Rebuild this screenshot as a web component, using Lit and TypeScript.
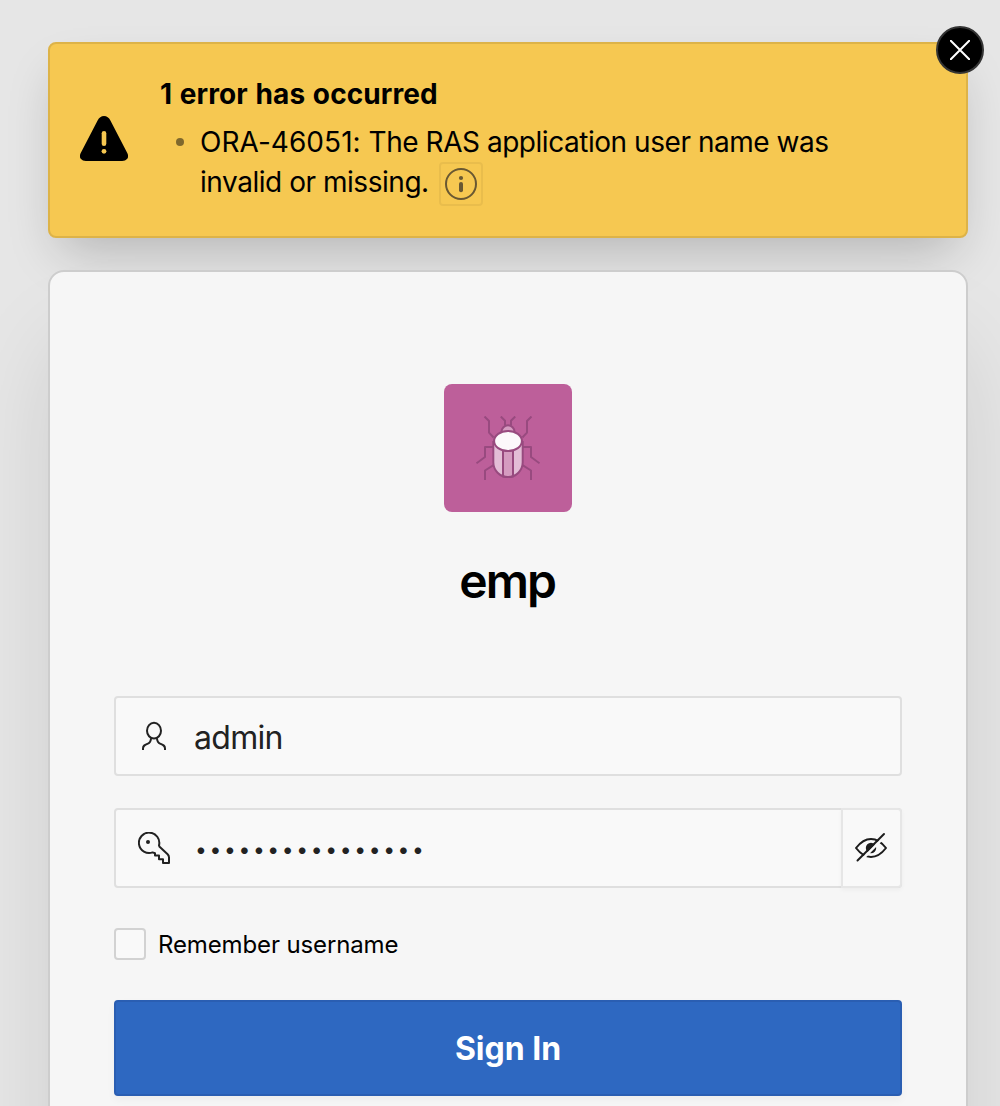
import { LitElement, html, css, svg } from "lit";
import { customElement, property, state } from "lit/decorators.js";

interface AlertMessage {
  code: string;
  lines: string[];
}

@customElement("error-alert")
class ErrorAlert extends LitElement {
  static styles = css`
    :host {
      display: block;
    }
    .alert {
      position: relative;
      box-sizing: border-box;
      height: 196px;
      display: flex;
      align-items: flex-start;
      gap: 32px;
      padding: 30px;
      border: 2px solid #ddb348;
      border-radius: 8px;
      background: #f6c851;
      color: #000;
      box-shadow: 0 24px 48px -12px rgba(0, 0, 0, 0.22);
    }
    .warning {
      flex: none;
      align-self: center;
      width: 48px;
      height: 48px;
      margin-bottom: 2px;
    }
    .title {
      margin: 0 0 8px;
      font-size: 28px;
      line-height: 40px;
      font-weight: 700;
      letter-spacing: 0.08px;
      word-spacing: 1px;
    }
    .list {
      margin: 0;
      padding: 0;
      list-style: none;
    }
    .item {
      display: grid;
      grid-template-columns: 40px 660px;
      font-size: 28px;
      line-height: 40px;
      letter-spacing: -0.46px;
    }
    .code {
      letter-spacing: 0.04px;
    }
    .bullet {
      width: 8px;
      height: 8px;
      margin: 16px 0 0 16px;
      border-radius: 50%;
      background: #7f682c;
    }
    .info {
      display: inline-flex;
      align-items: center;
      justify-content: center;
      box-sizing: border-box;
      width: 44px;
      height: 44px;
      margin-left: 10px;
      padding: 0;
      vertical-align: -8px;
      border: 2px solid rgba(0, 0, 0, 0.05);
      border-radius: 4px;
      background: none;
    }
    .close {
      position: absolute;
      top: -18px;
      right: -18px;
      box-sizing: border-box;
      width: 48px;
      height: 48px;
      padding: 0;
      display: grid;
      place-items: center;
      border: 2px solid #343434;
      border-radius: 50%;
      background: #000;
    }
  `;

  @property() heading = "";
  @property({ attribute: false }) messages: AlertMessage[] = [];

  render() {
    return html`
      <div class="alert" role="alert">
        <svg class="warning" viewBox="0 0 48 48">
          <path d="M17.6 5.6Q19.8 1 24 1T30.4 5.6L47 37.4Q49.3 41.6 47 43.9Q45.400 46 42.200 46H5.800Q2.600 46 1 43.900Q-1.300 41.600 1 37.400Z" />
          <path d="M24 18.200V28.800" stroke="#f6c851" stroke-width="4.600" stroke-linecap="round" />
          <circle cx="24" cy="36.300" r="2.400" fill="#f6c851" />
        </svg>
        <div>
          <h2 class="title">${this.heading}</h2>
          <ul class="list">
            ${this.messages.map(
              (m) => html`<li class="item">
                <span class="bullet"></span>
                <span><span class="code">${`${m.code}: `}</span>${m.lines.map((line, i) => (i ? html`<br />${line}` : line))}<button class="info" aria-label="Details"><svg width="32" height="32" viewBox="0 0 32 32" fill="#695832"><circle cx="16" cy="16" r="15" fill="none" stroke="#695832" stroke-width="2" /><circle cx="16" cy="10" r="2.100" /><rect x="14" y="14" width="4" height="10.200" rx="2" /></svg></button></span>
              </li>`
            )}
          </ul>
        </div>
        <button class="close" aria-label="Close">
          <svg width="20" height="20" viewBox="0 0 20 20" stroke="#fff" stroke-width="2" stroke-linecap="round">
            <path d="M.8.8 19.200 19.200M19.200.8.8 19.200" />
          </svg>
        </button>
      </div>
    `;
  }
}

const leftLegs = "M8.500.5 13 5V16.600L17.600 21.500M17 31H9V41L.5 47.300M17.500 49.200 9 54.500V64M24.800.5 29 4.800V9.500";

const userIcon = svg`<svg width="32" height="32" viewBox="0 0 32 32" fill="none" stroke="#222" stroke-width="2">
  <ellipse cx="16" cy="10.700" rx="7" ry="7.900" />
  <path d="M5 30V28.500C5 25.600 6.600 25 9.500 23.800 12 22.800 13 21.500 13 18.200M27 30V28.500C27 25.600 25.400 25 22.500 23.800 20 22.800 19 21.500 19 18.200" />
</svg>`;

const keyIcon = svg`<svg width="32" height="32" viewBox="0 0 32 32" fill="none" stroke="#222" stroke-width="2">
  <path d="M21 13.300A10.200 10.200 0 1 0 14.600 20.400L17 21.200V23.500H21V27.300H25V31H31V25.500Q31 23.600 29.600 22.200L21.600 14.800Z" stroke-linejoin="round" />
  <circle cx="10" cy="10" r="2" fill="#222" stroke="none" />
</svg>`;

@customElement("app-root")
class AppRoot extends LitElement {
  static styles = css`
    :host {
      display: block;
      font-family: Inter, "Liberation Sans", sans-serif;
    }
    .page {
      box-sizing: border-box;
      height: 1106px;
      overflow: hidden;
      padding: 42px 32px 0 48px;
      background: #e6e6e6;
      color: #000;
    }
    .card {
      position: relative;
      box-sizing: border-box;
      height: 960px;
      margin-top: 32px;
      padding: 112px 64px 0;
      display: flex;
      flex-direction: column;
      align-items: stretch;
      border: 2px solid #cdcdcd;
      border-radius: 16px;
      background: #f6f6f6;
      box-shadow: 0 64px 96px -16px rgba(0, 0, 0, 0.14);
    }
    .logo {
      align-self: center;
      width: 128px;
      height: 128px;
      display: grid;
      place-items: center;
      border-radius: 8px;
      background: #bd5f9a;
    }
    .name {
      margin: 41px 0 87px;
      text-align: center;
      font-size: 48px;
      line-height: 56px;
      font-weight: 600;
      letter-spacing: -1.9px;
      text-indent: -1.5px;
    }
    .field {
      box-sizing: border-box;
      height: 80px;
      display: flex;
      align-items: center;
      border: 2px solid #dfdfdf;
      border-radius: 4px;
      background: #f9f9f9;
      color: #222;
    }
    .field + .field {
      margin-top: 32px;
    }
    .icon {
      display: flex;
      width: 32px;
      height: 32px;
      margin: 0 24px 0 22px;
    }
    .value {
      flex: 1;
      padding-top: 2px;
      font-size: 32px;
      letter-spacing: -0.7px;
    }
    .masked {
      font-size: 21px;
      letter-spacing: 2.66px;
      padding: 3px 0 0 1px;
    }
    .reveal {
      align-self: stretch;
      box-sizing: border-box;
      width: 61px;
      margin: -2px;
      padding: 0 1px 0 0;
      display: grid;
      place-items: center;
      border: 2px solid #e6e6e6;
      border-radius: 0 4px 4px 0;
      background: #f9f9f9;
      box-shadow: 0 2px 4px rgba(0, 0, 0, 0.04);
    }
    .remember {
      display: flex;
      align-items: center;
      gap: 12px;
      height: 32px;
      margin: 40px 0;
      font-size: 24px;
      letter-spacing: -0.13px;
    }
    .caption {
      padding-top: 1px;
    }
    .box {
      box-sizing: border-box;
      width: 32px;
      height: 32px;
      border: 2px solid #d2d2d2;
      border-radius: 4px;
      background: #f9f9f9;
    }
    .submit {
      box-sizing: border-box;
      flex: none;
      height: 96px;
      padding: 1px 0 0;
      border: 2px solid #2a5eb2;
      border-radius: 4px;
      background: #2e68c1;
      color: #fff;
      font: 700 32px Inter, "Liberation Sans", sans-serif;
      box-shadow: 0 4px 8px rgba(0, 0, 0, 0.04);
    }
  `;

  @state() private username = "admin";
  @state() private passwordLength = 16;

  render() {
    return html`
      <main class="page">
        <error-alert
          .heading=${"1 error has occurred"}
          .messages=${[{ code: "ORA-46051", lines: ["The RAS application user name was", "invalid or missing."] }]}
        ></error-alert>
        <section class="card">
          <div class="logo">
            <svg width="64" height="64" viewBox="0 0 64 64" fill="none" stroke="#984a7f" stroke-width="2" stroke-linejoin="round">
              <path d=${leftLegs} />
              <path d=${leftLegs} transform="matrix(-1 0 0 1 64 0)" />
              <path d="M25.500 17V15.800A6.500 6.500 0 0 1 38.500 15.800V17Z" fill="#d59bc0" />
              <path d="M17.300 25V46.300A14.700 14.700 0 0 0 46.700 46.300V25Z" fill="#e3bdd6" stroke="none" />
              <path d="M27 33H37V60.500Q32 61.600 27 60.500Z" fill="#d59bc0" />
              <path d="M17.300 25V46.300A14.700 14.700 0 0 0 46.700 46.300V25" />
              <ellipse cx="32" cy="25" rx="13.900" ry="10" fill="#fcf8fb" />
            </svg>
          </div>
          <h1 class="name">emp</h1>
          <div class="field">
            <span class="icon">${userIcon}</span>
            <span class="value">${this.username}</span>
          </div>
          <div class="field">
            <span class="icon">${keyIcon}</span>
            <span class="value masked">${"•".repeat(this.passwordLength)}</span>
            <button class="reveal" aria-label="Show password">
              <svg width="34" height="34" viewBox="0 0 34 34" fill="none" stroke="#1c1c1c" stroke-width="2">
                <path d="M2 17Q9 8 17 8T32 17Q25 26 17 26T2 17Z" stroke-linejoin="round" />
                <circle cx="17" cy="17" r="5.200" fill="#1c1c1c" stroke="none" />
                <path d="M31.500 4.600 5 31.500" stroke="#f9f9f9" stroke-width="2.600" />
                <path d="M30 3 3.500 29.500" stroke-linecap="round" />
              </svg>
            </button>
          </div>
          <label class="remember"><span class="box"></span><span class="caption">Remember username</span></label>
          <button class="submit">Sign In</button>
        </section>
      </main>
    `;
  }
}
